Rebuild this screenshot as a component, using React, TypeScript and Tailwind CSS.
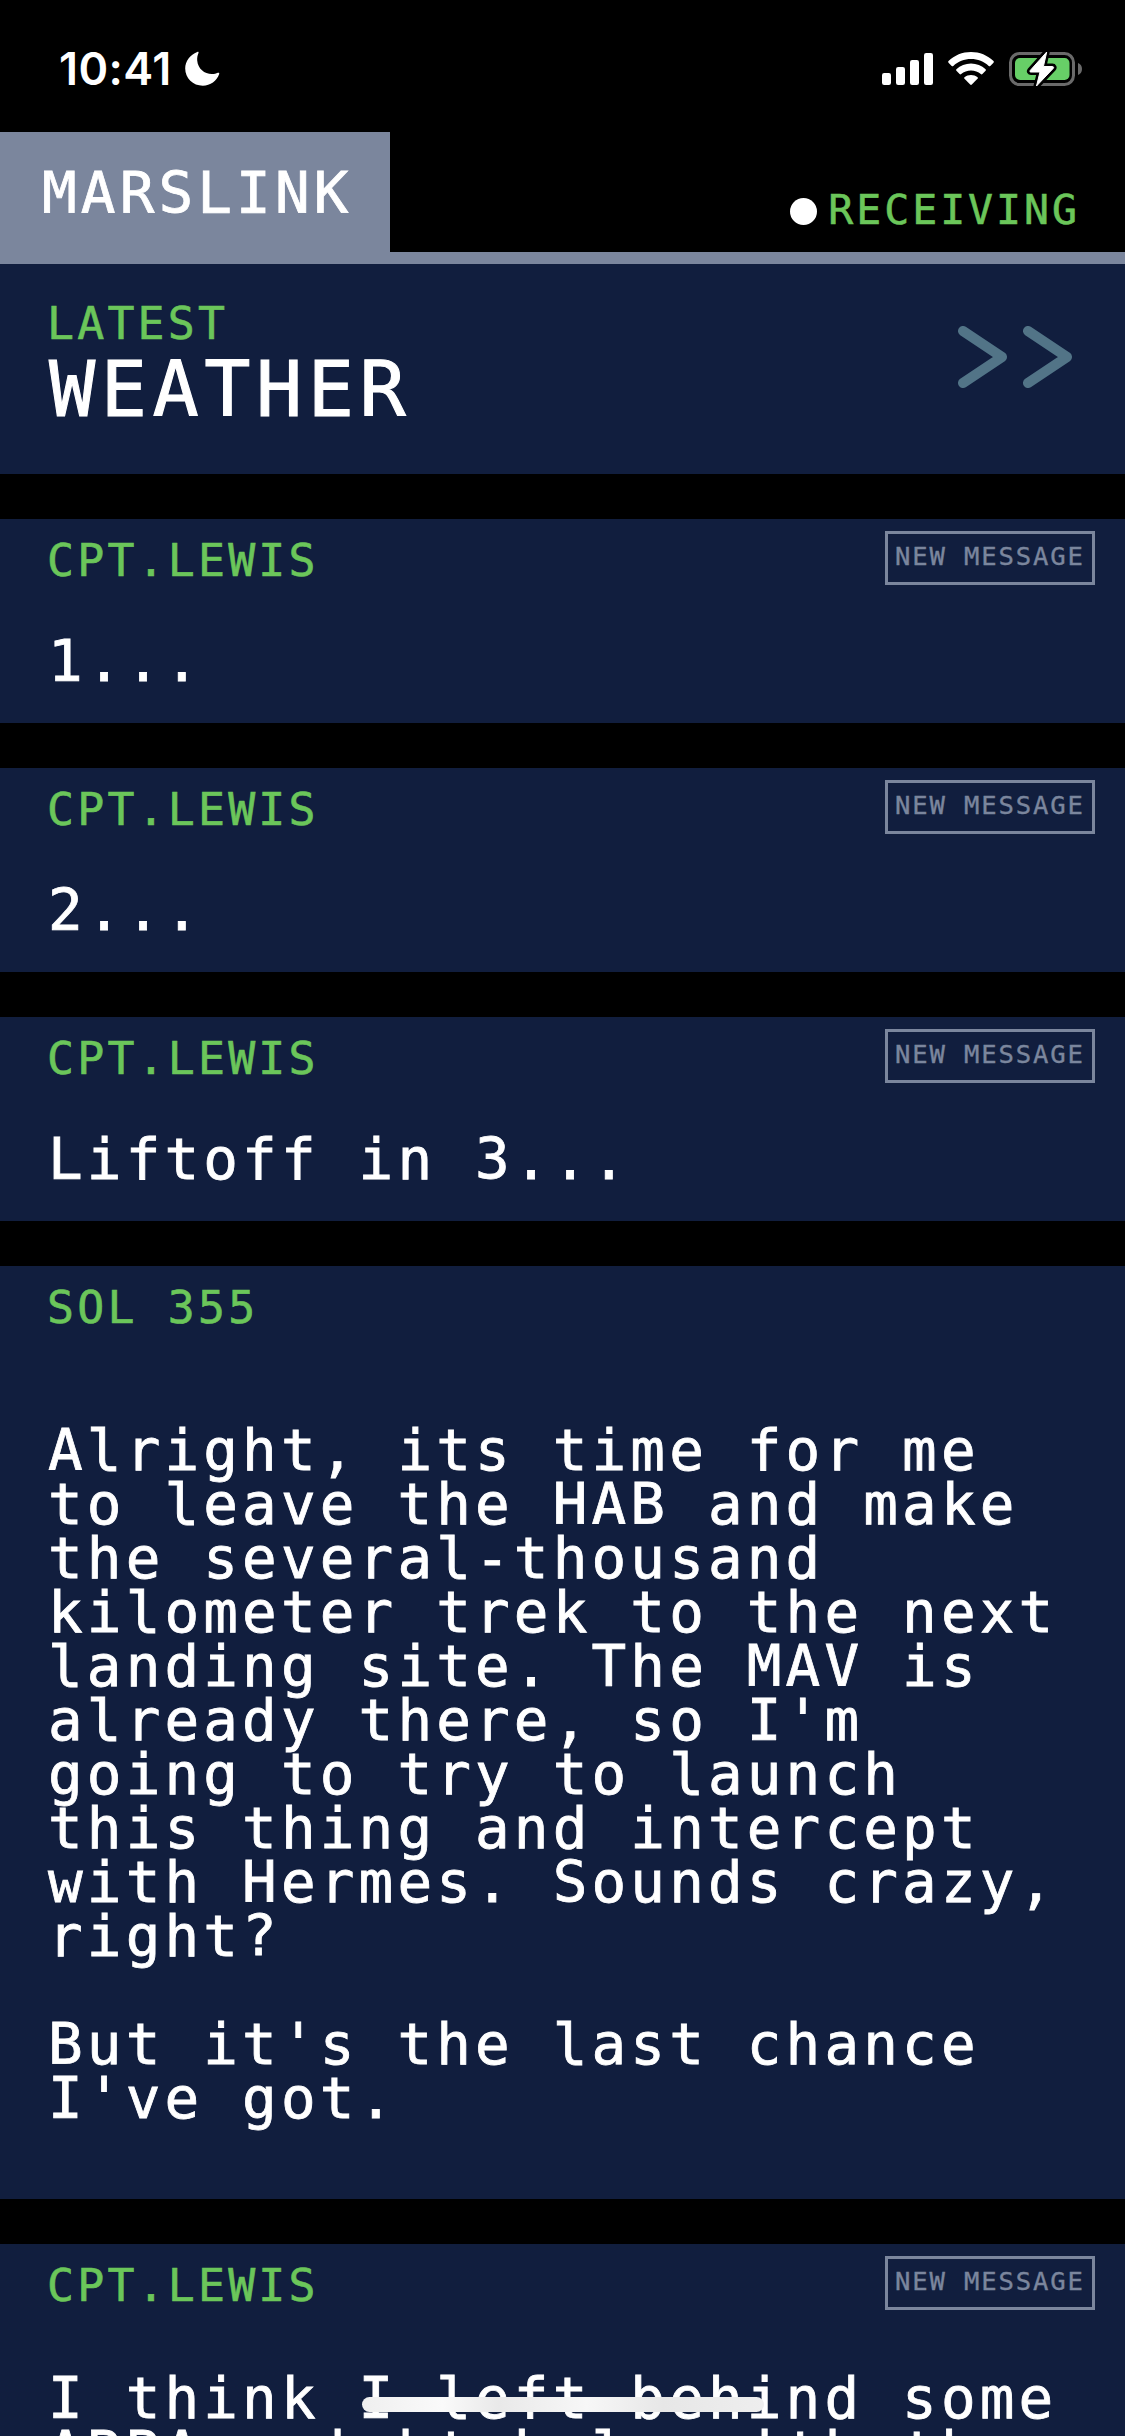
import React from "react";

const mono =
  "font-['DejaVu_Sans_Mono','Liberation_Mono',monospace] tracking-[0.072em] whitespace-pre [-webkit-text-stroke:0.014em_currentColor]";

function StatusBar() {
  return (
    <div className="flex h-[132px] shrink-0 items-start justify-between pr-[43px] pl-[59px]">
      <div className="flex">
        <span className="mt-[42px] w-[126px] font-['Inter',sans-serif] text-[45px] leading-[54px] font-semibold tracking-[0.4px] text-white">
          10:41
        </span>
        <svg className="mt-[51px]" width="35" height="35" viewBox="0 0 35 35" fill="#fff">
          <path d="M12.2 1.1C13.2 .4 14 1 13.4 2.2C12.4 4.6 12 7 12.2 9.6C12.9 18 19.6 23.2 27 23.1C29.5 23 31 22.5 32.8 21.8C33.9 21.4 34.6 22 34.2 23.1C31.8 30 25.4 34.8 17.8 34.8C8 34.8 .2 27.3 .2 17.6C.2 10.2 5.2 3.7 12.2 1.1Z" />
        </svg>
      </div>
      <div className="flex">
        <svg className="mt-[53px]" width="51" height="32" viewBox="0 0 51 32" fill="#fff">
          <rect x="0" y="20" width="9" height="12" rx="2.2" />
          <rect x="14" y="14" width="9" height="18" rx="2.2" />
          <rect x="28" y="7" width="9" height="25" rx="2.2" />
          <rect x="42" y="0" width="9" height="32" rx="2.2" />
        </svg>
        <svg className="mt-[52px] ml-[15px]" width="46" height="33" viewBox="0 0 46 33" fill="#fff">
          <path d="M23 0C31.6 0 39.6 3.3 45.5 9.1C46 9.6 46 10.2 45.5 10.7L42.3 13.9C41.9 14.4 41.2 14.4 40.7 13.9C36 9.5 29.7 7 23 7C16.3 7 10 9.5 5.3 13.9C4.8 14.4 4.1 14.4 3.7 13.9L.5 10.7C0 10.2 0 9.6 .5 9.1C6.4 3.3 14.4 0 23 0Z" />
          <path d="M23 11.5C28.5 11.5 33.7 13.6 37.6 17.2C38.1 17.7 38.1 18.3 37.6 18.8L34.4 22C33.9 22.5 33.3 22.5 32.8 22C30.2 19.7 26.7 18.4 23 18.4C19.3 18.4 15.8 19.7 13.2 22C12.7 22.5 12.1 22.5 11.6 22L8.4 18.8C7.9 18.3 7.9 17.7 8.4 17.2C12.3 13.6 17.5 11.5 23 11.5Z" />
          <path d="M23 23C25.4 23 27.7 23.8 29.5 25.2C30 25.6 30 26.3 29.5 26.8L23.8 32.5C23.3 33 22.7 33 22.2 32.5L16.5 26.8C16 26.3 16 25.6 16.5 25.2C18.3 23.8 20.6 23 23 23Z" />
        </svg>
        <svg className="mt-[50px] ml-[15px]" width="73" height="38" viewBox="0 0 73 38">
          <rect x="1.5" y="3.5" width="63" height="31" rx="9" fill="none" stroke="#6a6a6a" strokeWidth="3" />
          <path d="M69 13C71.6 14 73 16.3 73 19C73 21.7 71.6 24 69 25Z" fill="#6a6a6a" />
          <rect x="6" y="8" width="54.5" height="22" rx="5" fill="#67cf67" />
          <path
            d="M37.7 2L21.2 20.5C20.5 21.4 20.9 22 22 22H31L27.5 36L44.2 18.4C45 17.4 44.6 16.5 43.4 16.5H34.4Z"
            fill="#000" stroke="#000" strokeWidth="6" strokeLinejoin="round"
          />
          <path
            d="M37.7 2L21.2 20.5C20.5 21.4 20.9 22 22 22H31L27.5 36L44.2 18.4C45 17.4 44.6 16.5 43.4 16.5H34.4Z"
            fill="#fff" stroke="#fff" strokeWidth="1" strokeLinejoin="round"
          />
        </svg>
      </div>
    </div>
  );
}

function Header() {
  return (
    <header className="flex h-[132px] shrink-0 items-start justify-between border-b-[12px] border-[#7b869d]">
      <div className={`h-[120px] w-[390px] bg-[#7b869d] pt-[32px] pl-[42px] text-[57.6px] leading-[60px] text-white ${mono}`}>
        MARSLINK
      </div>
      <div className="flex items-center pt-[54px] pr-[45px]">
        <span className="mt-[3px] mr-[11px] size-[27px] rounded-full bg-white" />
        <span className={`text-[41.5px] leading-[48px] text-[#6bc65a] ${mono}`}>RECEIVING</span>
      </div>
    </header>
  );
}

function Weather() {
  return (
    <section className="flex h-[210px] shrink-0 justify-between bg-[#111e3e] pr-[53px] pl-[47px]">
      <div className="pt-[36px]">
        <div className={`text-[44.8px] leading-[48px] text-[#6bc65a] ${mono}`}>LATEST</div>
        <div className={`pl-[2px] text-[76.8px] leading-[84px] text-white ${mono}`}>WEATHER</div>
      </div>
      <svg
        className="mt-[62px]" width="114" height="62" viewBox="0 0 114 62"
        fill="none" stroke="#527487" strokeWidth="10" strokeLinecap="round" strokeLinejoin="round"
      >
        <path d="M5 5L44 31L5 57M70 5L109 31L70 57" />
      </svg>
    </section>
  );
}

type MessageProps = { from: string; text: string; isNew?: boolean; card: string; body: string };

function Message({ from, text, isNew, card, body }: MessageProps) {
  return (
    <article className={`shrink-0 bg-[#111e3e] pr-[30px] pl-[47px] ${card}`}>
      <div className="flex h-[66px] items-start justify-between pt-[12px]">
        <div className={`mt-[6px] text-[44.8px] leading-[48px] text-[#6bc65a] ${mono}`}>{from}</div>
        {isNew && (
          <div className={`h-[54px] w-[210px] border-[3px] border-[#7b869d] pt-[7px] pl-[7px] text-[25.6px] leading-[30px] text-[#7b869d] ${mono}`}>
            NEW MESSAGE
          </div>
        )}
      </div>
      <p className={`pl-[1px] text-[57.6px] leading-[54px] text-white ${mono} ${body}`}>{text}</p>
    </article>
  );
}

const log = [
  "Alright, its time for me",
  "to leave the HAB and make",
  "the several-thousand",
  "kilometer trek to the next",
  "landing site. The MAV is",
  "already there, so I'm",
  "going to try to launch",
  "this thing and intercept",
  "with Hermes. Sounds crazy,",
  "right?",
  "",
  "But it's the last chance",
  "I've got.",
].join("\n");

export default function App() {
  return (
    <div className="relative flex h-[2436px] w-[1125px] flex-col overflow-hidden bg-black">
      <StatusBar />
      <Header />
      <Weather />
      <main className="flex flex-col gap-[45px] pt-[45px]">
        <Message from="CPT.LEWIS" text="1..." isNew card="h-[204px]" body="pt-[50px]" />
        <Message from="CPT.LEWIS" text="2..." isNew card="h-[204px]" body="pt-[50px]" />
        <Message from="CPT.LEWIS" text="Liftoff in 3..." isNew card="h-[204px]" body="pt-[50px]" />
        <Message from="SOL 355" text={log} card="h-[933px]" body="pt-[92px]" />
        <Message from="CPT.LEWIS" text={"I think I left behind some\nABBA, might help with the"} isNew card="h-[250px]" body="pt-[62px]" />
      </main>
      <div className="absolute bottom-[24px] left-[362px] h-[15px] w-[402px] rounded-full bg-[linear-gradient(90deg,#efefef,#fafafa_20%,#e9e9e9_34%,#f7f7f7_56%,#e7e7e7_75%,#eeeeee)]" />
    </div>
  );
}
